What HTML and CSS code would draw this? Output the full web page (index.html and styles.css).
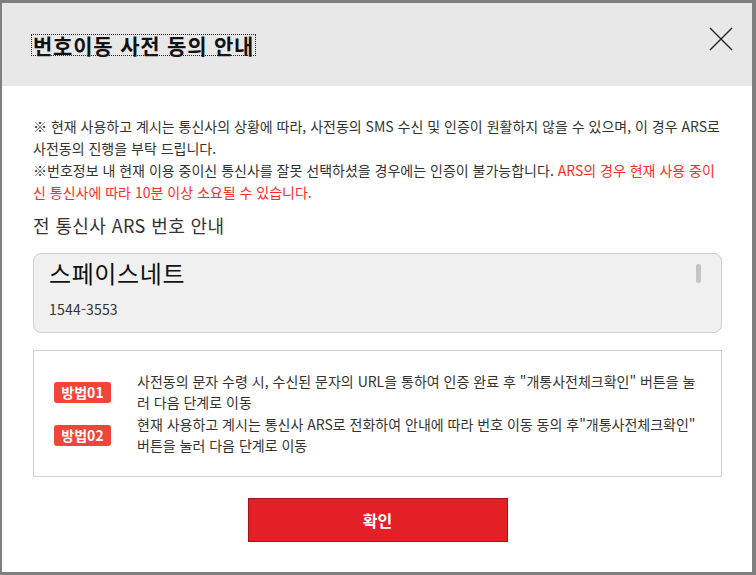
FILE: index.html
```html
<!DOCTYPE html>
<html lang="ko">
<head>
<meta charset="utf-8">
<title>번호이동 사전 동의 안내</title>
<link rel="stylesheet" href="styles.css">
</head>
<body>
<div class="dialog">
  <div class="header">
    <h1 class="title">번호이동 사전 동의 안내</h1>
    <button class="close" aria-label="닫기">
      <svg width="24" height="24" viewBox="0 0 24 24"><path d="M1 1L23 23M23 1L1 23" stroke="#222" stroke-width="1.4" fill="none"/></svg>
    </button>
  </div>
  <div class="body">
    <div class="notice">
      <p>※ 현재 사용하고 계시는 통신사의 상황에 따라, 사전동의 SMS 수신 및 인증이 원활하지 않을 수 있으며, 이 경우 ARS로 사전동의 진행을 부탁 드립니다.</p>
      <p>※번호정보 내 현재 이용 중이신 통신사를 잘못 선택하셨을 경우에는 인증이 불가능합니다. <span class="red">ARS의 경우 현재 사용 중이신 통신사에 따라 10분 이상 소요될 수 있습니다.</span></p>
    </div>
    <h2 class="sub">전 통신사 ARS 번호 안내</h2>
    <div class="ars">
      <div class="ars-name">스페이스네트</div>
      <div class="ars-num">1544-3553</div>
      <span class="thumb"></span>
    </div>
    <div class="methods">
      <div class="method">
        <span class="badge">방법01</span>
        <p>사전동의 문자 수령 시, 수신된 문자의 URL을 통하여 인증 완료 후 "개통사전체크확인" 버튼을 눌러 다음 단계로 이동</p>
      </div>
      <div class="method">
        <span class="badge">방법02</span>
        <p>현재 사용하고 계시는 통신사 ARS로 전화하여 안내에 따라 번호 이동 동의 후"개통사전체크확인" 버튼을 눌러 다음 단계로 이동</p>
      </div>
    </div>
    <div class="actions">
      <button class="confirm">확인</button>
    </div>
  </div>
</div>
</body>
</html>
```
FILE: styles.css
```css
* { box-sizing: border-box; }
html, body { margin: 0; padding: 0; }
body {
  background: #7f7f7f;
  font-family: "Noto Sans CJK KR", "Noto Sans", sans-serif;
  color: #333;
}
.dialog {
  margin: 3px 4px 3px 2px;
  height: 569px;
  background: #fff;
  display: flex;
  flex-direction: column;
}
.header {
  flex: none;
  height: 83px;
  background: #e8e8e8;
  display: flex;
  align-items: center;
  justify-content: space-between;
  padding: 0 19px 0 30px;
}
.title {
  margin: 0;
  font-size: 21px;
  font-weight: 700;
  letter-spacing: 0.8px;
  color: #111;
  line-height: 20px;
  outline: 1px dotted #222;
  padding: 0 1px;
}
.close {
  border: 0;
  background: none;
  padding: 0;
  width: 24px;
  height: 24px;
  margin-top: -12px;
}
.close svg { display: block; }
.body {
  padding: 0 30px 0 31px;
}
.notice {
  margin-top: 29px;
  font-size: 14px;
  line-height: 22px;
  color: #333;
}
.notice p { margin: 0; }
.red { color: #ff2a2a; }
.sub {
  margin: 10px 0 0;
  font-size: 18px;
  font-weight: 400;
  letter-spacing: 0.4px;
  line-height: 24px;
  color: #333;
}
.ars {
  position: relative;
  margin-top: 16px;
  height: 80px;
  background: #f0f0f0;
  border: 1px solid #cfcfcf;
  border-radius: 8px;
  padding: 3px 15px;
}
.ars-name {
  font-size: 24px;
  letter-spacing: 0.6px;
  line-height: 32px;
  color: #111;
}
.ars-num {
  margin-top: 11px;
  font-size: 14px;
  letter-spacing: 0.2px;
  line-height: 18px;
  color: #333;
}
.thumb {
  position: absolute;
  right: 20px;
  top: 10px;
  width: 5px;
  height: 19px;
  border-radius: 3px;
  background: #c4c4c4;
}
.methods {
  margin-top: 17px;
  border: 1px solid #d0d0d0;
  padding: 20px 20px 20px;
  display: flex;
  flex-direction: column;
  gap: 1px;
}
.method {
  display: flex;
  align-items: center;
}
.badge {
  flex: none;
  width: 57px;
  height: 21px;
  border-radius: 3px;
  background: #f24438;
  color: #fff;
  font-size: 14px;
  font-weight: 700;
  line-height: 21px;
  text-align: center;
  margin-right: 26px;
}
.method p {
  margin: 0;
  font-size: 14px;
  line-height: 21px;
  color: #333;
}
.actions {
  display: flex;
  justify-content: center;
  margin-top: 21px;
}
.confirm {
  width: 260px;
  height: 44px;
  background: #e32026;
  border: 1px solid #a3141a;
  color: #fff;
  font-family: inherit;
  font-size: 16px;
  font-weight: 700;
  cursor: pointer;
}
```
